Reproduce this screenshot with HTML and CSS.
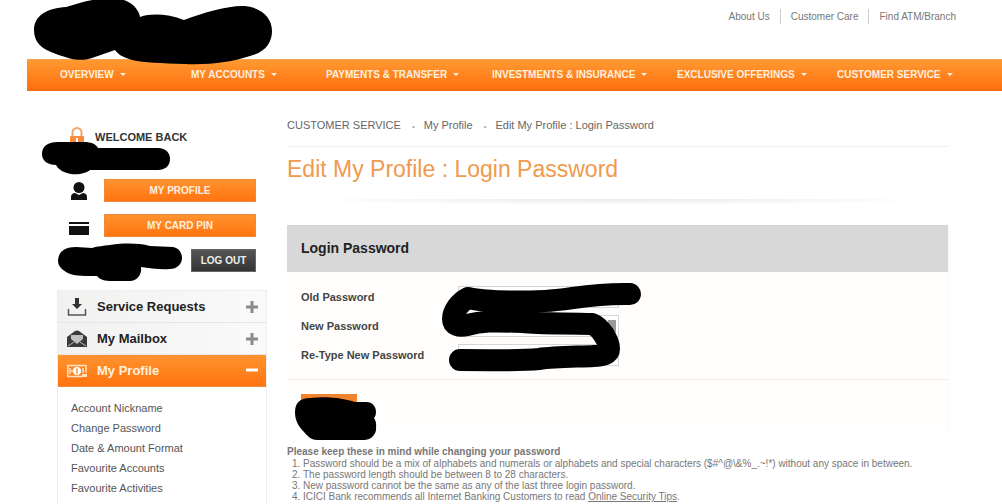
FILE: index.html
```html
<!DOCTYPE html>
<html lang="en">
<head>
<meta charset="utf-8">
<title>Edit My Profile : Login Password</title>
<link rel="stylesheet" href="styles.css">
</head>
<body>
<header class="top">
  <nav class="top-links" aria-label="Help">
    <a href="#">About Us</a>
    <a href="#">Customer Care</a>
    <a href="#">Find ATM/Branch</a>
  </nav>
</header>
<nav class="main-nav" aria-label="Main">
  <a href="#">OVERVIEW</a>
  <a href="#">MY ACCOUNTS</a>
  <a href="#">PAYMENTS &amp; TRANSFER</a>
  <a href="#">INVESTMENTS &amp; INSURANCE</a>
  <a href="#">EXCLUSIVE OFFERINGS</a>
  <a href="#">CUSTOMER SERVICE</a>
</nav>
<div class="page">
  <aside class="side">
    <section class="user">
      <div class="welcome">
        <svg width="16" height="20" viewBox="0 0 16 20" aria-hidden="true"><path d="M3.500 9V5.500a4.500 4.500 0 0 1 9 0V9" fill="none" stroke="#f3a468" stroke-width="2"/><rect x="1" y="9" width="14" height="10" rx="1" fill="#f58d3c"/><path d="M8 11v5" stroke="#fff" stroke-width="2"/></svg>
        <span>WELCOME BACK</span>
      </div>
      <div class="user-row">
        <svg width="20" height="20" viewBox="0 0 20 20" aria-hidden="true"><circle cx="10" cy="6.500" r="5.500" fill="#111"/><path d="M2 19v-3c0-3 2-4 4-4l4 2 4-2c2 0 4 1 4 4v3z" fill="#111"/></svg>
        <button class="btn" type="button">MY PROFILE</button>
      </div>
      <div class="user-row">
        <svg width="20" height="20" viewBox="0 0 20 20" aria-hidden="true"><path d="M0 6h20v2H0zM0 10h20v9H0z" fill="#111"/></svg>
        <button class="btn" type="button">MY CARD PIN</button>
      </div>
      <div class="logout"><button class="btn dark" type="button">LOG OUT</button></div>
    </section>
    <nav class="menu" aria-label="Services">
      <button class="menu-head" type="button">
        <svg width="20" height="20" viewBox="0 0 20 20" aria-hidden="true"><path d="M8 1h4v6h3l-5 5-5-5h3z" fill="#333"/><path d="M1.500 12v6h17v-6" fill="none" stroke="#555" stroke-width="1.500"/></svg>
        <span>Service Requests</span>
        <svg width="12" height="12" viewBox="0 0 12 12" aria-hidden="true"><path d="M6 0v12M0 6h12" stroke="#8a8a8a" stroke-width="3"/></svg>
      </button>
      <button class="menu-head" type="button">
        <svg width="20" height="20" viewBox="0 0 20 20" aria-hidden="true"><path d="M0 8l8-6q2-1 4 0l8 6v10H0z" fill="#3a3a3a"/><path d="M4 6h12v4l-6 5-6-5z" fill="#c0c0c0"/><path d="M1 17l6-4M19 17l-6-4" fill="none" stroke="#bbb"/></svg>
        <span>My Mailbox</span>
        <svg width="12" height="12" viewBox="0 0 12 12" aria-hidden="true"><path d="M6 0v12M0 6h12" stroke="#8a8a8a" stroke-width="3"/></svg>
      </button>
      <button class="menu-head open" type="button">
        <svg width="20" height="20" viewBox="0 0 20 20" aria-hidden="true"><path d="M19 12V4.500H.8v11H15" fill="none" stroke="#ffe3c4" stroke-width="1.500"/><circle cx="10" cy="10" r="4" fill="#fff"/><path d="M10 7.500v5" stroke="#ff8a22" stroke-width="1.500"/><path d="M3 7v6M4 10h2M16 7v5" stroke="#ffe3c4" stroke-width="1.500"/><path d="M15 13h5v3h-5z" fill="#ffe3c4"/></svg>
        <span>My Profile</span>
        <svg width="12" height="12" viewBox="0 0 12 12" aria-hidden="true"><path d="M0 5h12" stroke="#fff" stroke-width="3"/></svg>
      </button>
      <ul class="menu-list">
        <li><a href="#">Account Nickname</a></li>
        <li><a href="#">Change Password</a></li>
        <li><a href="#">Date &amp; Amount Format</a></li>
        <li><a href="#">Favourite Accounts</a></li>
        <li><a href="#">Favourite Activities</a></li>
        <li><a href="#">LC &amp; Collection</a></li>
      </ul>
    </nav>
  </aside>
  <main class="content">
    <nav class="crumbs" aria-label="Breadcrumb">
      <a href="#">CUSTOMER SERVICE</a>
      <a href="#">My Profile</a>
      <a href="#">Edit My Profile : Login Password</a>
    </nav>
    <h1>Edit My Profile : Login Password</h1>
    <div class="shade"></div>
    <form class="panel">
      <h2>Login Password</h2>
      <div class="fields">
        <div class="field"><label for="old">Old Password</label><input id="old" type="password"></div>
        <div class="field"><label for="new">New Password</label><input id="new" type="password" class="keyed"></div>
        <div class="field"><label for="again">Re-Type New Password</label><input id="again" type="password"></div>
      </div>
      <div class="actions"><button class="submit" type="submit" aria-label="Submit"></button></div>
    </form>
    <section class="notes">
      <h3>Please keep these in mind while changing your password</h3>
      <ol>
        <li>Password should be a mix of alphabets and numerals or alphabets and special characters ($#^@\&amp;%_.~!*) without any space in between.</li>
        <li>The password length should be between 8 to 28 characters.</li>
        <li>New password cannot be the same as any of the last three login password.</li>
        <li>ICICI Bank recommends all Internet Banking Customers to read <a href="#">Online Security Tips</a>.</li>
      </ol>
    </section>
  </main>
</div>
<svg class="marks" width="700" height="460" viewBox="0 0 700 460" aria-hidden="true">
  <path d="M34 30C34 15 48 8 66 7 80 3 90-1 105-1h13c10 0 21 9 22 18 12-4 28-3 44 3 21-8 46-15 61-14 17 2 27 12 27 25 0 11-6 21-22 25-18 6-40 9-65 8-25-1-40-1-53-4-10-3-14-6-17-10l-23 8c-12 4-22 1-36-4C42 49 34 43 34 30z"/>
  <path d="M42 154c0-8 6-12 16-12h26c7 0 12 2 14 6h60c8 0 12 5 12 11 0 7-5 11-12 11H90c-6 5-22 7-32-2l-2-3c-8 0-14-4-14-11z"/>
  <path d="M58 260c1-9 7-13 18-13l16 1c6-2 11-2 18-3 15-2 28-2 40 1l23 1c6 1 9 6 9 11 0 6-5 11-12 11-10 1-20-1-29-2 1 8-4 14-11 14h-18c-7 0-12-1-15-5-17 0-25 0-31-4-6-4-8-7-8-12z"/>
  <path d="M630 294C590 293 570 300 545 301c-30 1-60 1-77-3-8 4-15 13-15 21 0 6 6 8 14 6 15-4 25-4 55-3 20 2 45 1 70 2 8 3 17 16 17 25 0 5-7 7-15 7-25 1-40 1-55 3-20 2-40 1-79 1" fill="none" stroke="#000" stroke-width="22" stroke-linecap="round" stroke-linejoin="round"/>
  <path d="M295 412c0-9 5-14 15-14 20-2 35 1 45 4h11c7 0 10 5 10 10 0 3-1 5-2 6 3 4 2 9 2 12-1 6-6 10-12 10h-47c-5 0-9-3-13-8-6-6-9-12-9-20z"/>
</svg>
</body>
</html>
```
FILE: styles.css
```css
* { box-sizing: border-box; }
body {
  margin: 0;
  height: 100vh;
  overflow: hidden;
  position: relative;
  background: #fff;
  color: #555;
  font: 11px/16px "Liberation Sans", Arial, sans-serif;
}
a { color: inherit; text-decoration: none; }
button { font: inherit; border: 0; padding: 0; cursor: pointer; }
h1, h2, h3, ol, ul { margin: 0; padding: 0; }

.top { height: 59px; padding: 9px 46px 0 0; }
.top-links { display: flex; justify-content: flex-end; font-size: 10px; line-height: 15px; color: #777; }
.top-links a + a { margin-left: 10px; padding-left: 10px; border-left: 1px solid #ccc; }

.main-nav {
  display: grid;
  grid-template-columns: 131fr 135fr 166fr 185fr 160fr 165fr;
  align-items: center;
  height: 32px;
  margin-left: 27px;
  padding: 0 0 2px 33px;
  background: linear-gradient(#ff9a30, #ff6d10);
  border-top: 1px solid #f5a55c;
  color: #fff0df;
  font-size: 10px;
  font-weight: bold;
  white-space: nowrap;
}
.main-nav a::after {
  content: "";
  display: inline-block;
  margin-left: 6px;
  vertical-align: 2px;
  border: 3px solid transparent;
  border-top-color: #fff0df;
  border-bottom: 0;
}

.page { display: flex; gap: 20px; padding: 0 53px 0 57px; }
.side { flex: 0 0 210px; padding-top: 36px; }
.content { flex: 1; min-width: 0; padding-top: 26px; }

.user { padding: 0 11px 0 12px; }
.welcome { display: flex; align-items: center; gap: 10px; height: 20px; margin-bottom: 32px; color: #333; font-weight: bold; }
.user-row { display: flex; align-items: center; gap: 15px; margin-bottom: 12px; }
.btn {
  flex: 1;
  height: 23px;
  background: linear-gradient(#ff9330, #ff7410);
  border: 1px solid #f08a3a;
  color: #fff0df;
  font-size: 10px;
  font-weight: bold;
}
.logout { display: flex; justify-content: flex-end; }
.dark { flex: 0 0 65px; background: linear-gradient(#555, #333); border-color: #666; color: #eee; }

.menu { margin-top: 18px; border: 1px solid #eee; }
.menu-head {
  display: flex;
  align-items: center;
  gap: 10px;
  width: 100%;
  height: 32px;
  padding: 0 8px 0 9px;
  background: linear-gradient(90deg, #f1f1f0, #fafafa);
  border-bottom: 1px solid #e6e6e6;
  color: #222;
  font-size: 13px;
  font-weight: bold;
  text-align: left;
}
.menu-head span { flex: 1; }
.menu-head.open { background: linear-gradient(#ff9330, #ff7410); border-color: #f08a3a; color: #fff0df; }
.menu-list { list-style: none; padding: 11px 0 0 13px; line-height: 20px; }

.crumbs { display: flex; padding-bottom: 11px; border-bottom: 1px solid #f1f1f1; line-height: 17px; color: #666; }
.crumbs a + a::before { content: "•"; margin: 0 9px 0 11px; color: #aaa; font-size: 8px; }
h1 { padding-top: 8px; color: #f09a4e; font-size: 23px; font-weight: normal; line-height: 28px; }
.shade { height: 6px; margin: 16px 0 20px; background: radial-gradient(ellipse at top, #e9e9e9, #fff 70%); }

.panel { background: #fffefd; border-right: 1px solid #f7f5f5; }
h2 { padding: 0 14px; background: #d9d8d9; color: #222; font-size: 14px; line-height: 47px; }
.fields { padding: 10px 14px; border-bottom: 1px solid #eee; }
.field { display: flex; align-items: center; height: 29px; }
.field label { flex: 0 0 157px; color: #444; font-weight: bold; }
.field input { width: 161px; height: 22px; border: 1px solid #d5d5d5; background: #fff; }
.field .keyed { background: linear-gradient(#999, #999) no-repeat right 2px center / 8px 12px #fff; }
.actions { height: 50px; padding: 14px; }
.submit { display: block; width: 56px; height: 24px; background: #f0832b; }

.notes { padding-top: 16px; color: #777; font-size: 10px; line-height: 11px; }
.notes h3 { font-size: 10px; line-height: 12px; }
.notes ol { padding-left: 16px; }
.notes a { text-decoration: underline; }

.marks { position: absolute; left: 0; top: 0; pointer-events: none; }
```
